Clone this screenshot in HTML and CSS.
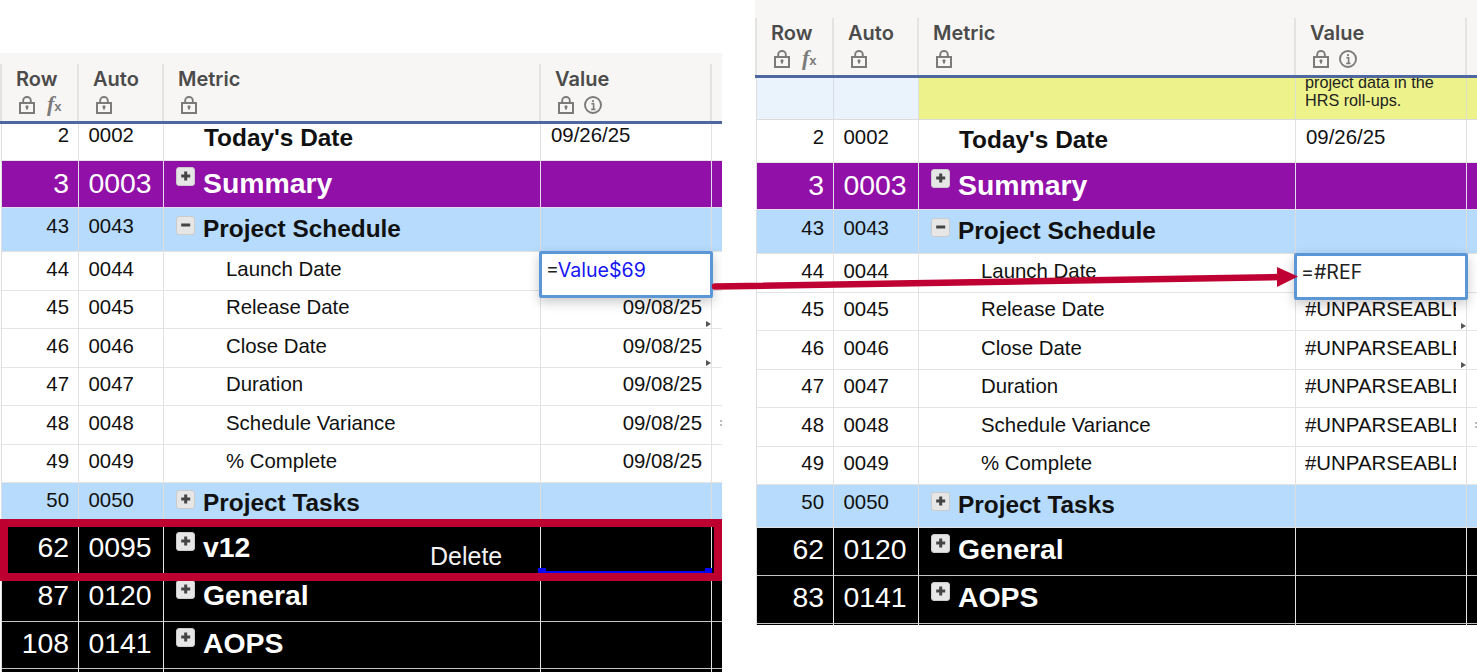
FILE: index.html
```html
<!DOCTYPE html>
<html lang="en">
<head>
<meta charset="utf-8">
<title>Sheet before and after deleting a row</title>
<link rel="stylesheet" href="styles.css">
</head>
<body>
<svg width="0" height="0" class="defs">
  <symbol id="lock" viewBox="0 0 16 18"><path d="M4.2 7V4.4a3.8 3.4 0 0 1 7.6 0V7" fill="none" stroke="currentColor" stroke-width="1.9"/><rect x="1" y="7" width="14" height="10" fill="none" stroke="currentColor" stroke-width="2"/><path d="M8 10v3.5" stroke="currentColor" stroke-width="2"/><circle cx="8" cy="10.8" r="1.6" fill="currentColor"/></symbol>
  <symbol id="info" viewBox="0 0 18 18"><circle cx="9" cy="9" r="8" fill="none" stroke="currentColor" stroke-width="1.9"/><path d="M7.4 7.8h2.2v5.4M7.2 13.4h4.2" fill="none" stroke="currentColor" stroke-width="1.6"/><circle cx="9" cy="5.2" r="1.1" fill="currentColor"/></symbol>
  <symbol id="plus" viewBox="0 0 17 17"><path d="M8.7 3.5v9M4.2 8h9" stroke="currentColor" stroke-width="3" fill="none"/></symbol>
  <symbol id="minus" viewBox="0 0 17 17"><path d="M4.2 8h9" stroke="currentColor" stroke-width="3" fill="none"/></symbol>
</svg>
<main class="stage">

<section class="sheet sheet-left">
  <div class="head">
    <div class="gutter-head"></div>
    <div class="hcell"><div class="hname">Row</div><div class="hicons"><svg class="ico-lock"><use href="#lock"/></svg><span class="fx">f<span class="fx-x">x</span></span></div></div>
    <div class="hcell"><div class="hname">Auto</div><div class="hicons"><svg class="ico-lock"><use href="#lock"/></svg></div></div>
    <div class="hcell"><div class="hname">Metric</div><div class="hicons"><svg class="ico-lock"><use href="#lock"/></svg></div></div>
    <div class="hcell"><div class="hname">Value</div><div class="hicons"><svg class="ico-lock"><use href="#lock"/></svg><svg class="ico-info"><use href="#info"/></svg></div></div>
    <div class="hcell hcell-tail"></div>
  </div>
  <div class="body">
    <div class="rows rows-scrolled">
      <div class="row h43"><i class="gutter"></i><div class="cell num">2</div><div class="cell auto">0002</div><div class="cell metric title nobox">Today's Date</div><div class="cell value">09/26/25</div><div class="cell tail"></div></div>
      <div class="row h47 purple big"><i class="gutter"></i><div class="cell num">3</div><div class="cell auto">0003</div><div class="cell metric title"><span class="box"><svg><use href="#plus"/></svg></span>Summary</div><div class="cell value"></div><div class="cell tail"></div></div>
      <div class="row h44 blue low"><i class="gutter"></i><div class="cell num">43</div><div class="cell auto">0043</div><div class="cell metric title"><span class="box"><svg><use href="#minus"/></svg></span>Project Schedule</div><div class="cell value"></div><div class="cell tail"></div></div>
      <div class="row h39"><i class="gutter"></i><div class="cell num">44</div><div class="cell auto">0044</div><div class="cell metric sub">Launch Date</div><div class="cell value"><div class="editor"><span class="eq">=</span><span class="ref">Value$69</span></div></div><div class="cell tail"></div></div>
      <div class="row h38"><i class="gutter"></i><div class="cell num">45</div><div class="cell auto">0045</div><div class="cell metric sub">Release Date</div><div class="cell value right">09/08/25<i class="tri"></i></div><div class="cell tail"></div></div>
      <div class="row h39"><i class="gutter"></i><div class="cell num">46</div><div class="cell auto">0046</div><div class="cell metric sub">Close Date</div><div class="cell value right">09/08/25<i class="tri"></i></div><div class="cell tail"></div></div>
      <div class="row h38"><i class="gutter"></i><div class="cell num">47</div><div class="cell auto">0047</div><div class="cell metric sub">Duration</div><div class="cell value right">09/08/25</div><div class="cell tail"></div></div>
      <div class="row h39"><i class="gutter"></i><div class="cell num">48</div><div class="cell auto">0048</div><div class="cell metric sub">Schedule Variance</div><div class="cell value right">09/08/25</div><div class="cell tail"><i class="speck"></i></div></div>
      <div class="row h38"><i class="gutter"></i><div class="cell num">49</div><div class="cell auto">0049</div><div class="cell metric sub">% Complete</div><div class="cell value right">09/08/25</div><div class="cell tail"></div></div>
      <div class="row h43 blue"><i class="gutter"></i><div class="cell num">50</div><div class="cell auto">0050</div><div class="cell metric title"><span class="box"><svg><use href="#plus"/></svg></span>Project Tasks</div><div class="cell value"></div><div class="cell tail"></div></div>
      <div class="row h48 black big"><i class="gutter"></i><div class="cell num">62</div><div class="cell auto">0095</div><div class="cell metric title"><span class="box"><svg><use href="#plus"/></svg></span>v12</div><div class="cell value"><i class="selection"></i></div><div class="cell tail"></div></div>
      <div class="row h48 black big"><i class="gutter"></i><div class="cell num">87</div><div class="cell auto">0120</div><div class="cell metric title"><span class="box"><svg><use href="#plus"/></svg></span>General</div><div class="cell value"></div><div class="cell tail"></div></div>
      <div class="row h47 black big"><i class="gutter"></i><div class="cell num">108</div><div class="cell auto">0141</div><div class="cell metric title"><span class="box"><svg><use href="#plus"/></svg></span>AOPS</div><div class="cell value"></div><div class="cell tail"></div></div>
      <div class="row h47 black big"><i class="gutter"></i><div class="cell num"></div><div class="cell auto"></div><div class="cell metric"></div><div class="cell value"></div><div class="cell tail"></div></div>
    </div>
  </div>
  <div class="delete-mark"><span class="delete-label">Delete</span></div>
</section>

<section class="sheet sheet-right">
  <div class="head">
    <div class="gutter-head"></div>
    <div class="hcell"><div class="hname">Row</div><div class="hicons"><svg class="ico-lock"><use href="#lock"/></svg><span class="fx">f<span class="fx-x">x</span></span></div></div>
    <div class="hcell"><div class="hname">Auto</div><div class="hicons"><svg class="ico-lock"><use href="#lock"/></svg></div></div>
    <div class="hcell"><div class="hname">Metric</div><div class="hicons"><svg class="ico-lock"><use href="#lock"/></svg></div></div>
    <div class="hcell"><div class="hname">Value</div><div class="hicons"><svg class="ico-lock"><use href="#lock"/></svg><svg class="ico-info"><use href="#info"/></svg></div></div>
    <div class="hcell hcell-tail"></div>
  </div>
  <div class="body">
    <div class="rows">
      <div class="row h42 note"><i class="gutter"></i><div class="cell num tint"></div><div class="cell auto tint"></div><div class="cell metric"></div><div class="cell value note-text">project data in the HRS roll-ups.</div><div class="cell tail"></div></div>
      <div class="row h43"><i class="gutter"></i><div class="cell num">2</div><div class="cell auto">0002</div><div class="cell metric title nobox">Today's Date</div><div class="cell value">09/26/25</div><div class="cell tail"></div></div>
      <div class="row h47 purple big"><i class="gutter"></i><div class="cell num">3</div><div class="cell auto">0003</div><div class="cell metric title"><span class="box"><svg><use href="#plus"/></svg></span>Summary</div><div class="cell value"></div><div class="cell tail"></div></div>
      <div class="row h44 blue low"><i class="gutter"></i><div class="cell num">43</div><div class="cell auto">0043</div><div class="cell metric title"><span class="box"><svg><use href="#minus"/></svg></span>Project Schedule</div><div class="cell value"></div><div class="cell tail"></div></div>
      <div class="row h39"><i class="gutter"></i><div class="cell num">44</div><div class="cell auto">0044</div><div class="cell metric sub">Launch Date</div><div class="cell value"><div class="editor"><span class="eq">=#REF</span></div></div><div class="cell tail"></div></div>
      <div class="row h38"><i class="gutter"></i><div class="cell num">45</div><div class="cell auto">0045</div><div class="cell metric sub">Release Date</div><div class="cell value"><span class="clip">#UNPARSEABLE</span><i class="tri"></i></div><div class="cell tail"></div></div>
      <div class="row h39"><i class="gutter"></i><div class="cell num">46</div><div class="cell auto">0046</div><div class="cell metric sub">Close Date</div><div class="cell value"><span class="clip">#UNPARSEABLE</span><i class="tri"></i></div><div class="cell tail"></div></div>
      <div class="row h38"><i class="gutter"></i><div class="cell num">47</div><div class="cell auto">0047</div><div class="cell metric sub">Duration</div><div class="cell value"><span class="clip">#UNPARSEABLE</span></div><div class="cell tail"></div></div>
      <div class="row h39"><i class="gutter"></i><div class="cell num">48</div><div class="cell auto">0048</div><div class="cell metric sub">Schedule Variance</div><div class="cell value"><span class="clip">#UNPARSEABLE</span></div><div class="cell tail"><i class="speck"></i></div></div>
      <div class="row h38"><i class="gutter"></i><div class="cell num">49</div><div class="cell auto">0049</div><div class="cell metric sub">% Complete</div><div class="cell value"><span class="clip">#UNPARSEABLE</span></div><div class="cell tail"></div></div>
      <div class="row h43 blue"><i class="gutter"></i><div class="cell num">50</div><div class="cell auto">0050</div><div class="cell metric title"><span class="box"><svg><use href="#plus"/></svg></span>Project Tasks</div><div class="cell value"></div><div class="cell tail"></div></div>
      <div class="row h48 black big"><i class="gutter"></i><div class="cell num">62</div><div class="cell auto">0120</div><div class="cell metric title"><span class="box"><svg><use href="#plus"/></svg></span>General</div><div class="cell value"></div><div class="cell tail"></div></div>
      <div class="row h48 black big"><i class="gutter"></i><div class="cell num">83</div><div class="cell auto">0141</div><div class="cell metric title"><span class="box"><svg><use href="#plus"/></svg></span>AOPS</div><div class="cell value"></div><div class="cell tail"></div></div>
      <div class="row h47 black big"><i class="gutter"></i><div class="cell num"></div><div class="cell auto"></div><div class="cell metric"></div><div class="cell value"></div><div class="cell tail"></div></div>
    </div>
  </div>
</section>

<svg class="arrow" width="1477" height="672" viewBox="0 0 1477 672" aria-hidden="true">
  <path d="M715 286.5L1280 277" stroke="#be0032" stroke-width="6.5" stroke-linecap="round" fill="none"/>
  <path d="M1277 267L1298 276.5L1277 287Z" fill="#be0032"/>
</svg>
</main>
</body>
</html>
```
FILE: styles.css
```css
* { box-sizing: border-box; }
html, body { margin: 0; padding: 0; background: #fff; }
body { font-family: "Liberation Sans", Arial, sans-serif; color: #111; }
.defs { position: absolute; }
.stage { position: relative; width: 1477px; height: 672px; overflow: hidden; }

.sheet { position: absolute; width: 722px; display: flex; flex-direction: column; overflow: hidden; }
.sheet-left { left: 0; top: 53px; height: 619px; }
.sheet-right { left: 755px; top: 0; height: 625px; }

.head, .row { display: grid; grid-template-columns: 2px 77px 85px 377px 171px 10px; }
.head { background: #f7f6f4; border-bottom: 3px solid #4f67a1; align-items: end; flex: none; }
.sheet-left .head { height: 71px; }
.sheet-right .head { height: 78px; }
.gutter-head { height: 57px; border-right: 2px solid #e3e3e2; }
.hcell { height: 57px; padding: 4px 0 0 14px; border-right: 2px solid #e3e3e2; color: #4b4b4b; }
.hcell-tail { border-right: 0; }
.hname { font-family: Inter, "Liberation Sans", sans-serif; font-weight: 600; font-size: 20px; line-height: 22px; }
.hicons { display: flex; align-items: center; margin: 6px 0 0 3px; height: 18px; color: #7b7b7b; }
.ico-lock { width: 16px; height: 18px; flex: none; }
.ico-info { width: 18px; height: 18px; margin-left: 10px; flex: none; }
.fx { font-family: "Liberation Serif", serif; font-style: italic; font-weight: 700; font-size: 22px; line-height: 18px; margin-left: 12px; color: #7b7b7b; }
.fx-x { font-size: 13px; font-style: normal; font-family: "Liberation Sans", sans-serif; }

.body { flex: 1; overflow: hidden; }
.rows-scrolled { margin-top: -6px; }

.h38 { height: 38px; } .h39 { height: 39px; } .h42 { height: 42px; } .h43 { height: 43px; }
.h44 { height: 44px; } .h47 { height: 47px; } .h48 { height: 48px; }

.gutter { display: block; background: #fff; border-right: 1px solid #dedede; }
.cell {
  position: relative;
  padding-top: 6px;
  border-right: 1px solid #e2e2e2;
  border-bottom: 1px solid #e4e4e4;
  font-size: 20.4px;
  line-height: 23px;
  white-space: nowrap;
  overflow: hidden;
}
.low .cell { padding-top: 7px; }
.h38 .cell { padding-top: 5px; }
.num { text-align: right; padding-right: 9px; }
.auto { padding-left: 9.5px; }
.metric { padding-left: 12px; }
.sub { padding-left: 62px; }
.value { padding-left: 10px; padding-right: 9px; overflow: visible; }
.value.right { text-align: right; }
.tail { border-right: 0; overflow: visible; }
.clip { display: block; width: 151px; margin-left: -1px; overflow: hidden; }

.title { display: flex; align-items: flex-start; font-weight: 700; font-size: 24.4px; line-height: 28px; }
.nobox { padding-left: 40px; }
.box {
  flex: none; width: 19px; height: 19px; margin: 1px 8px 0 0;
  background: #e6e6e6; border: 1px solid #cbcbcb; border-radius: 3px; color: #444; display: block;
}
.box svg { display: block; width: 17px; height: 17px; }
.big .cell { font-size: 28.4px; line-height: 32px; }
.big .title { padding-top: 6px; line-height: 32px; }
.big .box { margin-top: 0; }
.purple .cell { background: #9110a8; color: #fff; border-color: #e5dcea; }
.blue .cell { background: #b6dbfd; border-right-color: #dcdcdc; border-bottom-color: #e2e2e2; }
.black .cell { background: #000; color: #fff; border-right-color: #e4e4e4; border-bottom-color: #c4c4c4; padding-top: 5px; }
.black .box { margin-top: 1px; }

.note .cell { background: #edf28b; border-bottom-color: #dcdcdc; border-right-color: #dedfd0; }
.note .tint { background: #eaf2fb; border-right-color: #d9dee6; }
.note-text {
  display: flex; align-items: flex-end; padding: 0 9px 10px;
  white-space: normal; font-size: 16.2px; line-height: 18px; color: #222; overflow: hidden;
}

.editor {
  position: absolute; left: -2px; top: -1px; width: 174px; height: 47px; z-index: 3;
  padding: 4px 0 0 4px; background: #fff; border: 3px solid #5b97d6; border-radius: 2px;
  box-shadow: 0 4px 12px rgba(0, 0, 0, .22);
  font-family: Inter, "Liberation Sans", sans-serif; font-size: 19.6px; line-height: 24px; color: #222;
}
.ref { color: #1616f5; }

.tri { position: absolute; right: 0; bottom: 1px; border-left: 5px solid #555; border-top: 3px solid transparent; border-bottom: 3px solid transparent; }
.speck { position: absolute; left: 8px; top: 14px; width: 2px; height: 6px; border-top: 2px solid #bbb; border-bottom: 2px solid #bbb; }

.selection { position: absolute; left: -3px; right: -2px; bottom: 0; height: 2px; background: #0808f0; }
.selection::before, .selection::after { content: ""; position: absolute; bottom: 0; width: 8px; height: 5px; background: #0808f0; }
.selection::before { left: 0; }
.selection::after { right: 0; }

.delete-mark { position: absolute; left: 0; top: 466px; width: 722px; height: 62px; border: 8px solid #be0030; z-index: 2; }
.delete-label { position: absolute; left: 422px; top: 15px; font-size: 25px; line-height: 28px; color: #f2f2f2; }

.arrow { position: absolute; left: 0; top: 0; pointer-events: none; z-index: 5; }
```
